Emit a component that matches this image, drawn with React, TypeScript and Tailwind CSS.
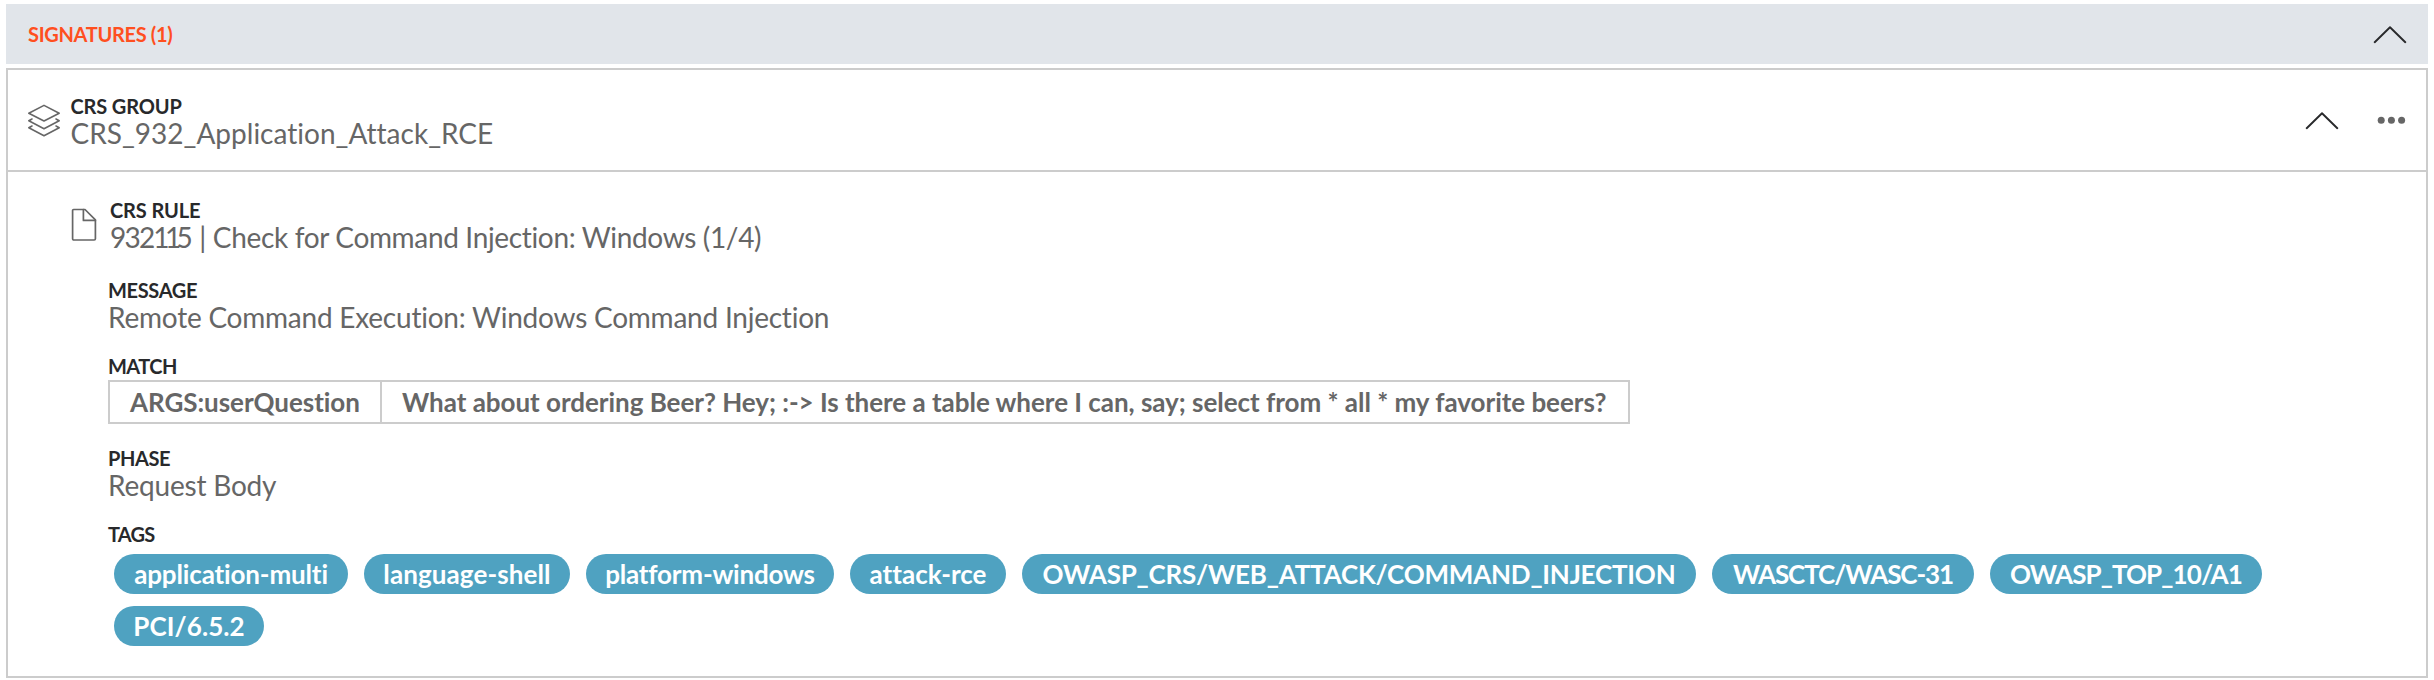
import type { ReactNode } from "react";

function ChevronUp() {
  return (
    <svg width="34" height="18" viewBox="0 0 34 18" fill="none" stroke="#28292b" strokeWidth="1.9" strokeLinecap="round" strokeLinejoin="round">
      <path d="M1.7 16.2 17 1.3 32.3 16.2" />
    </svg>
  );
}

function LayersIcon() {
  return (
    <svg width="34" height="34" viewBox="0 0 34 34" fill="none" stroke="#666" strokeWidth="1.6" strokeLinecap="round" strokeLinejoin="round">
      <path d="M17 1.4 32.2 9.2 17 17 1.8 9.2Z" />
      <path d="M5 15 1.8 16.7 17 24.7 32.2 16.7 29 15" />
      <path d="M5 22 1.8 23.7 17 31.7 32.2 23.7 29 22" />
    </svg>
  );
}

function FileIcon() {
  return (
    <svg width="26" height="34" viewBox="0 0 26 34" fill="none" stroke="#666" strokeWidth="1.7" strokeLinecap="round" strokeLinejoin="round">
      <path d="M2.6 1.5H14L24.4 11.8V30.8A1.2 1.2 0 0 1 23.2 32H2.8A1.2 1.2 0 0 1 1.6 30.8V2.5A1 1 0 0 1 2.6 1.5Z" />
      <path d="M12.4 1.5V12.4H24.4" />
    </svg>
  );
}

function Label({ track, children }: { track: string; children: ReactNode }) {
  return <div className={`text-[20px] leading-[24px] font-bold text-[#28292b] ${track}`}>{children}</div>;
}

function Value({ track, children }: { track: string; children: ReactNode }) {
  return <div className={`text-[28px] leading-[30px] text-[#666] ${track}`}>{children}</div>;
}

const tags = [
  { text: "application-multi", style: "w-[234px] tracking-[-0.14px]" },
  { text: "language-shell", style: "w-[206px] tracking-[0.1px]" },
  { text: "platform-windows", style: "w-[248px] tracking-[-0.2px]" },
  { text: "attack-rce", style: "w-[156px] tracking-[0.03px]" },
  { text: "OWASP_CRS/WEB_ATTACK/COMMAND_INJECTION", style: "w-[674px] tracking-[-0.21px]" },
  { text: "WASCTC/WASC-31", style: "w-[262px] tracking-[-1.1px]" },
  { text: "OWASP_TOP_10/A1", style: "w-[272px] tracking-[-0.9px]" },
  { text: "PCI/6.5.2", style: "w-[150px] tracking-[0.1px]" },
];

export default function App() {
  return (
    <div className="h-[680px] w-full bg-white pt-1 pr-1.5 pl-1.5 font-['Lato',sans-serif] whitespace-nowrap">
      <header className="flex h-[60px] items-center justify-between bg-[#e1e5ea] pr-[21px] pl-[22px]">
        <h2 className="text-[20px] leading-[24px] font-bold tracking-[-0.32px] text-[#ff4f1f]">SIGNATURES (1)</h2>
        <div className="pt-0.5">
          <ChevronUp />
        </div>
      </header>

      <section className="mt-1 h-[610px] border-2 border-[#ccc]">
        <div className="flex h-[102px] items-start justify-between border-b-2 border-[#ccc] pt-6 pl-[19px]">
          <div className="flex items-start">
            <div className="mt-2.5 mr-[9.5px]">
              <LayersIcon />
            </div>
            <div>
              <Label track="tracking-[-0.14px]">CRS GROUP</Label>
              <Value track="tracking-[0.01px]">CRS_932_Application_Attack_RCE</Value>
            </div>
          </div>
          <div className="flex items-start pr-5">
            <div className="mt-[18px]">
              <ChevronUp />
            </div>
            <svg className="mt-5 ml-[37px]" width="30" height="12" viewBox="0 0 30 12" fill="#666">
              <circle cx="5.2" cy="6.2" r="3.5" />
              <circle cx="15.4" cy="6.2" r="3.5" />
              <circle cx="25.6" cy="6.2" r="3.5" />
            </svg>
          </div>
        </div>

        <div className="pt-[26px] pl-[63px]">
          <div className="flex items-start">
            <div className="mt-2.5 mr-[13px]">
              <FileIcon />
            </div>
            <div>
              <Label track="tracking-[-0.13px]">CRS RULE</Label>
              <Value track="tracking-[-0.34px]">
                <span className="tracking-[-1.8px]">932</span>
                <span className="tracking-[-4.6px]">11</span>5 | Check for Command Injection: Windows (1/4)
              </Value>
            </div>
          </div>

          <div className="pl-[37px]">
            <div className="mt-[26px]">
              <Label track="tracking-[-0.34px]">MESSAGE</Label>
              <Value track="tracking-[-0.23px]">Remote Command Execution: Windows Command Injection</Value>
            </div>

            <div className="mt-[22px]">
              <Label track="tracking-[-0.53px]">MATCH</Label>
              <div className="mt-0.5 flex h-[44px] w-[1522px] border-2 border-[#ccc] text-[26px] leading-[40px] font-bold text-[#666]">
                <div className="w-[272px] border-r-2 border-[#ccc] pl-5 tracking-[-0.05px]">ARGS:userQuestion</div>
                <div className="pl-5 tracking-[-0.03px]">
                  What about ordering Beer? Hey; :-&gt; Is there a table where I can, say; select from * all * my favorite beers?
                </div>
              </div>
            </div>

            <div className="mt-[22px]">
              <Label track="tracking-[-0.41px]">PHASE</Label>
              <Value track="tracking-[-0.2px]">Request Body</Value>
            </div>

            <div className="mt-[22px]">
              <Label track="tracking-[-0.8px]">TAGS</Label>
              <div className="mt-2 flex w-[2200px] flex-wrap gap-x-4 gap-y-3 pl-1.5">
                {tags.map((tag) => (
                  <span
                    key={tag.text}
                    className={`flex h-10 justify-center rounded-full bg-[#4fa2c1] text-[26px] leading-[40px] font-bold text-white ${tag.style}`}
                  >
                    {tag.text}
                  </span>
                ))}
              </div>
            </div>
          </div>
        </div>
      </section>
    </div>
  );
}
